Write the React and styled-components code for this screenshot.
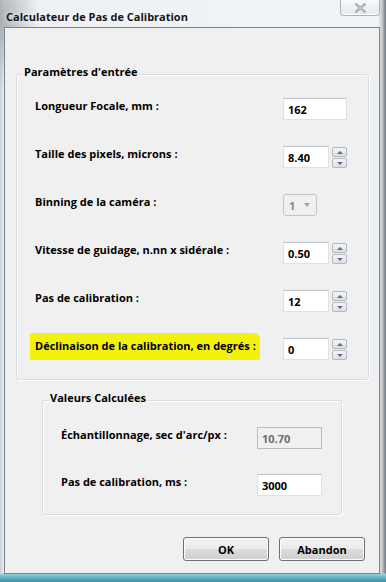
import React from "react";
import styled, { createGlobalStyle } from "styled-components";

const GlobalStyle = createGlobalStyle`
  html, body {
    margin: 0;
    padding: 0;
  }
  body {
    width: 386px;
    height: 582px;
    overflow: hidden;
    font-family: "Open Sans", "Noto Sans", "DejaVu Sans", sans-serif;
    color: #000;
  }
`;

const Window = styled.div`
  width: 386px;
  height: 582px;
  display: flex;
  flex-direction: column;
  box-sizing: border-box;
  background:
    linear-gradient(to bottom, transparent 0, transparent 573px, #8fd0dc 574px, #3b8fa6 582px),
    radial-gradient(ellipse 40px 70px at 0 20px, #a8aeb3, transparent),
    linear-gradient(to right, #c9cfd4 0, #eef1f4 4px, #f1f4f6 378px, #c4cace 382px, #6f777d 386px);
`;

const TitleBar = styled.div`
  height: 27px;
  display: flex;
  align-items: flex-start;
`;

const Title = styled.div`
  padding: 9px 0 0 6px;
  font-size: 11px;
  font-weight: 700;
  line-height: 16px;
  color: #151515;
  text-shadow: 0 0 6px #fff;
`;

const CloseButton = styled.div`
  margin-left: auto;
  margin-right: 6px;
  width: 40px;
  height: 16px;
  box-sizing: border-box;
  border: 1px solid #a9b2ba;
  border-top: none;
  border-radius: 0 0 4px 4px;
  background: linear-gradient(#f7f9fa, #e4e9ed);
  box-shadow: inset 0 -1px 0 #fff;
  display: flex;
  align-items: center;
  justify-content: center;
`;

const Client = styled.div`
  flex: 1;
  margin: 0 6px 8px 4px;
  background: #f0f0f0;
  border: 1px solid #7b8288;
  display: flex;
  flex-direction: column;
`;

const Group = styled.div`
  position: relative;
  box-sizing: border-box;
  width: ${(p) => p.$width}px;
  margin: ${(p) => p.$margin};
  padding: ${(p) => p.$padding};
  border: 1px solid #d5dfe5;
  border-radius: 3px;
  box-shadow: inset 1px 1px 0 #fff, 1px 1px 0 #fff;
  display: flex;
  flex-direction: column;
  gap: ${(p) => p.$gap}px;
`;

const Legend = styled.span`
  position: absolute;
  top: -11px;
  left: 6px;
  padding: 0 1px;
  background: #f0f0f0;
  font-size: 11px;
  font-weight: 700;
  line-height: 16px;
`;

const Row = styled.div`
  display: grid;
  grid-template-columns: ${(p) => p.$labelWidth}px auto;
  align-items: start;
  height: 22px;
`;

const Label = styled.span`
  justify-self: start;
  font-size: 11px;
  font-weight: 700;
  line-height: 16px;
  white-space: nowrap;
  ${(p) =>
    p.$highlight &&
    `
    background: #f2f20c;
    margin: -5px 0 0 -5px;
    padding: 5px 4px 6px 5px;
    border-radius: 2px 6px 3px 1px;
  `}
`;

const Field = styled.div`
  display: flex;
  gap: 3px;
`;

const TextBox = styled.input`
  width: ${(p) => p.$width}px;
  height: 22px;
  box-sizing: border-box;
  margin: 0;
  padding: 0 0 0 4px;
  border: 1px solid #dde2e7;
  border-top-color: #bfc4c9;
  border-radius: 0;
  background: ${(p) => (p.disabled ? "#f0f0f0" : "#fff")};
  color: ${(p) => (p.disabled ? "#6d6d6d" : "#000")};
  font-family: inherit;
  font-size: 11px;
  font-weight: 700;
  outline: none;
  ${(p) => p.disabled && "border-color: #b9bdc1;"}
`;

const Spin = styled.div`
  display: flex;
  flex-direction: column;
  gap: 1px;
  padding-top: 1px;
`;

const SpinButton = styled.div`
  width: 15px;
  height: 10px;
  box-sizing: border-box;
  border: 1px solid #b3b8bd;
  border-radius: 2px;
  background: linear-gradient(#f6f6f6, #dcdfe2);
  display: flex;
  align-items: center;
  justify-content: center;
  &::after {
    content: "";
    border-left: 3px solid transparent;
    border-right: 3px solid transparent;
    ${(p) =>
      p.$down ? "border-top: 3px solid #5a6d8c;" : "border-bottom: 3px solid #5a6d8c;"}
  }
`;

const Combo = styled.div`
  width: 34px;
  height: 22px;
  box-sizing: border-box;
  border: 1px solid #c2c6ca;
  border-radius: 3px;
  background: #f0f0f0;
  display: flex;
  align-items: center;
  justify-content: space-between;
  padding: 0 6px 0 5px;
  color: #8b8b8b;
  font-size: 11px;
  font-weight: 700;
  &::after {
    content: "";
    border-left: 3.5px solid transparent;
    border-right: 3.5px solid transparent;
    border-top: 4px solid #a3a3a3;
  }
`;

const Buttons = styled.div`
  display: flex;
  justify-content: flex-end;
  gap: 10px;
  margin-top: 22px;
  padding-right: 14px;
`;

const Button = styled.button`
  width: 86px;
  height: 24px;
  margin: 0;
  padding: 0;
  border: 1px solid #707070;
  border-radius: 3px;
  background: linear-gradient(#f2f2f2 0%, #ebebeb 50%, #dddddd 51%, #cfcfcf 100%);
  box-shadow: inset 0 0 0 1px #fcfcfc;
  font-family: inherit;
  font-size: 11px;
  font-weight: 700;
  color: #000;
`;

const inputs = [
  { label: "Longueur Focale, mm :", value: "162", width: 64 },
  { label: "Taille des pixels, microns :", value: "8.40", width: 46, spin: true },
  { label: "Binning de la caméra :", combo: "1" },
  { label: "Vitesse de guidage, n.nn x sidérale :", value: "0.50", width: 46, spin: true },
  { label: "Pas de calibration :", value: "12", width: 46, spin: true },
  {
    label: "Déclinaison de la calibration, en degrés :",
    value: "0",
    width: 46,
    spin: true,
    highlight: true,
  },
];

const App = () => {
  return (
    <Window>
      <GlobalStyle />
      <TitleBar>
        <Title>Calculateur de Pas de Calibration</Title>
        <CloseButton>
          <svg width="11" height="10" viewBox="0 0 11 10">
            <path
              d="M1.5 1.5 L9.5 8.5 M9.5 1.5 L1.5 8.5"
              stroke="#8f969c"
              strokeWidth="2.2"
              strokeLinecap="square"
            />
            <path
              d="M1.5 1.5 L9.5 8.5 M9.5 1.5 L1.5 8.5"
              stroke="#e9ecef"
              strokeWidth="0.8"
            />
          </svg>
        </CloseButton>
      </TitleBar>
      <Client>
        <Group $width={353} $margin="46px 0 0 11px" $padding="23px 0 19px 18px" $gap={26}>
          <Legend>Paramètres d'entrée</Legend>
          {inputs.map((item) => (
            <Row key={item.label} $labelWidth={248}>
              <Label $highlight={item.highlight}>{item.label}</Label>
              {item.combo ? (
                <Combo>{item.combo}</Combo>
              ) : (
                <Field>
                  <TextBox $width={item.width} defaultValue={item.value} />
                  {item.spin && (
                    <Spin>
                      <SpinButton />
                      <SpinButton $down />
                    </Spin>
                  )}
                </Field>
              )}
            </Row>
          ))}
        </Group>
        <Group $width={300} $margin="20px 0 0 37px" $padding="26px 0 18px 18px" $gap={25}>
          <Legend>Valeurs Calculées</Legend>
          <Row $labelWidth={196}>
            <Label>Échantillonnage, sec d'arc/px :</Label>
            <TextBox $width={65} defaultValue="10.70" disabled />
          </Row>
          <Row $labelWidth={196}>
            <Label>Pas de calibration, ms :</Label>
            <TextBox $width={65} defaultValue="3000" />
          </Row>
        </Group>
        <Buttons>
          <Button>OK</Button>
          <Button>Abandon</Button>
        </Buttons>
      </Client>
    </Window>
  );
};

export default App;
